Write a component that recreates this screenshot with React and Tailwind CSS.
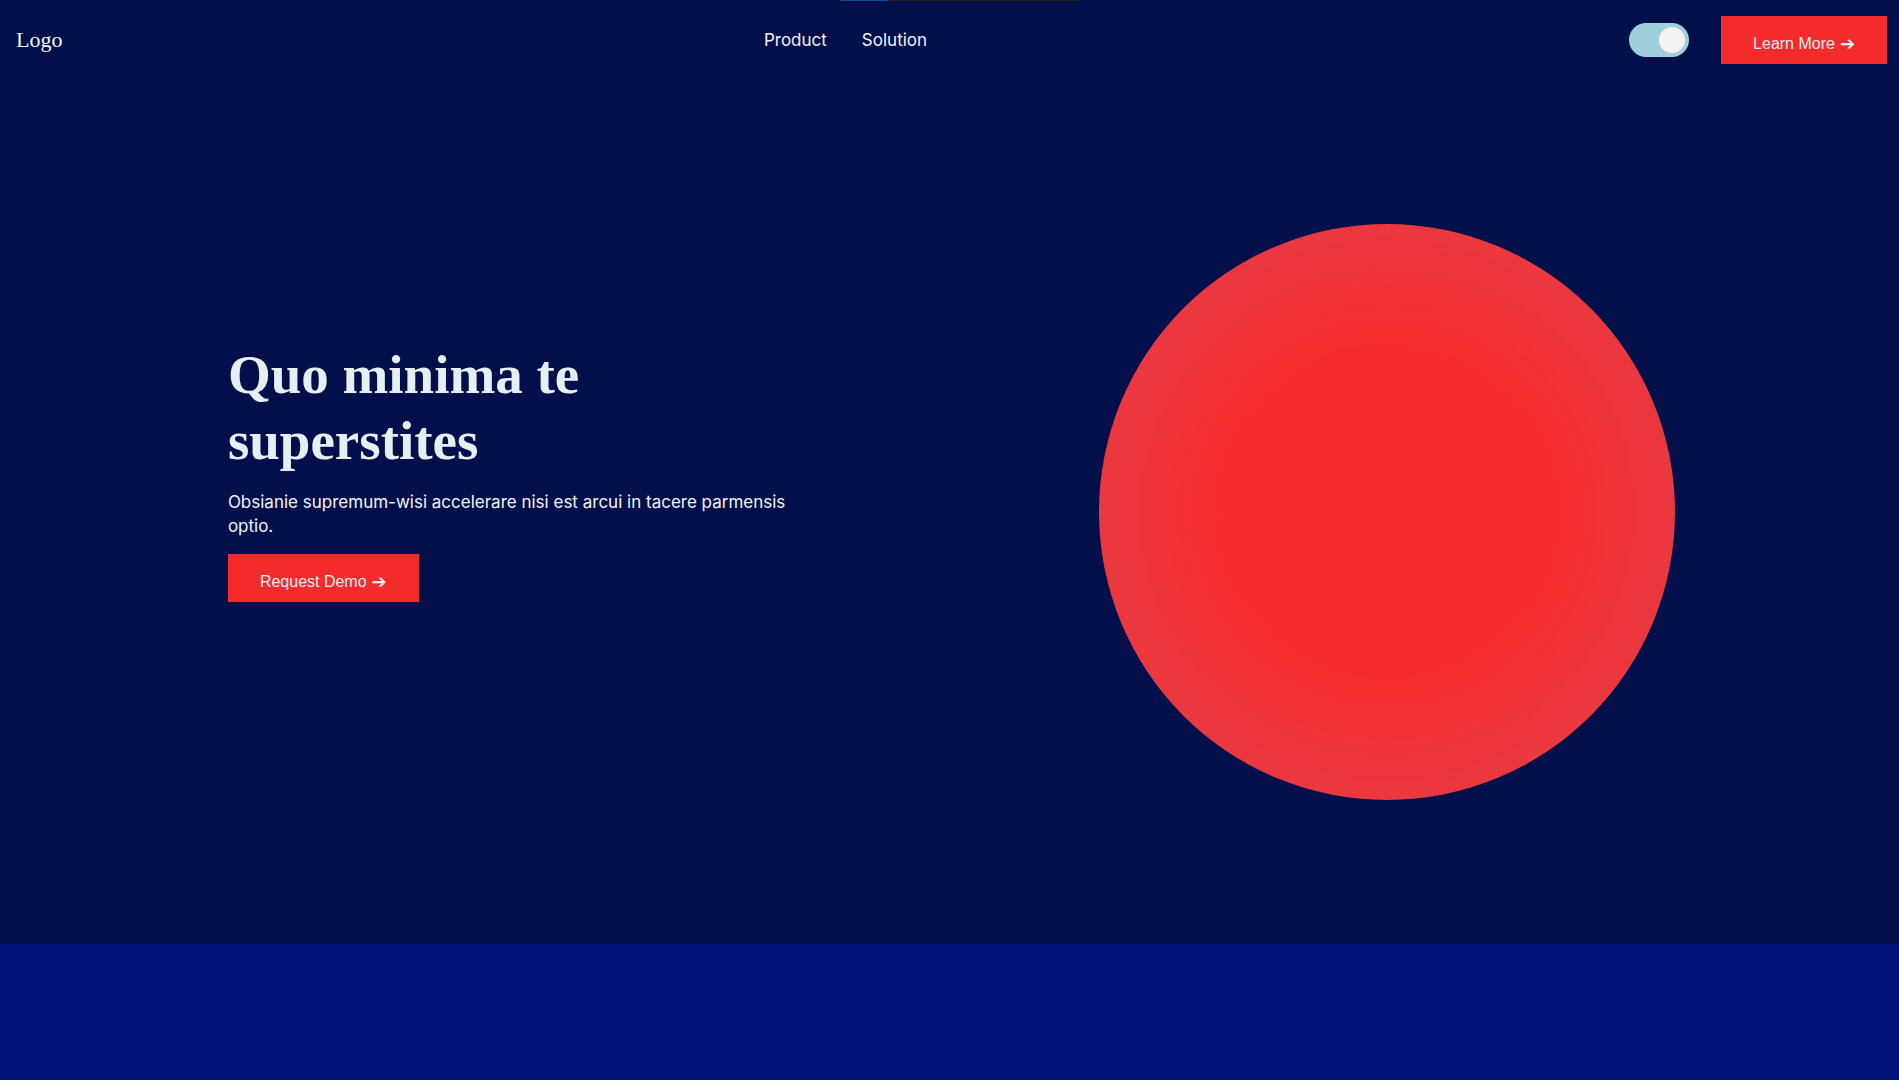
function ActionButton({ label, className = "" }) {
  return (
    <button
      type="button"
      className={`flex h-12 shrink-0 items-center gap-[5px] bg-[#f42b2b] px-8 pt-2 font-['Liberation_Sans',sans-serif] text-base leading-5 whitespace-nowrap text-[#e6eff3] ${className}`}
    >
      {label}
      <span aria-hidden="true" className="font-['DejaVu_Sans',sans-serif] text-lg leading-5">➔</span>
    </button>
  );
}

function ThemeSwitch() {
  return (
    <label className="flex shrink-0 cursor-pointer">
      <input type="checkbox" role="switch" defaultChecked aria-label="Dark theme" className="peer sr-only" />
      <span className="flex h-[34px] w-[60px] items-center rounded-full bg-gray-400 p-1 peer-checked:justify-end peer-checked:bg-[#a0cfdc]">
        <span className="size-[26px] rounded-full bg-[#f2f2f2]" />
      </span>
    </label>
  );
}

export default function App() {
  return (
    <div className="flex min-h-screen flex-col bg-[#030f4b] font-['Inter',sans-serif] text-[17px] leading-6 text-[#eef5f8]">
      <div aria-hidden="true" className="absolute inset-x-0 top-0 flex h-px justify-center">
        <span className="ml-5 w-12 bg-[#114a8c]" />
        <span className="w-48 bg-[#1f1f1f]" />
      </div>
      <header className="grid h-20 grid-cols-[1fr_auto_1fr] items-center pr-3 pl-4">
        <a href="#" className="font-['Liberation_Serif',serif] text-[22px]">Logo</a>
        <nav className="mr-[212px] flex gap-[35px]">
          <a href="#product">Product</a>
          <a href="#solution">Solution</a>
        </nav>
        <div className="flex items-center justify-end gap-8">
          <ThemeSwitch />
          <ActionButton label="Learn More" />
        </div>
      </header>
      <main className="flex grow flex-col">
        <section className="grid h-[864px] grid-cols-[49%_1fr] items-center pr-56 pl-[12%]">
          <div className="flex flex-col items-start pb-20">
            <h1 className="max-w-96 font-['Liberation_Serif',serif] text-[55px] leading-[66px] font-bold text-[#e6eff3]">
              Quo minima te superstites
            </h1>
            <p className="mt-4 max-w-[576px]">
              Obsianie supremum-wisi accelerare nisi est arcui in tacere parmensis optio.
            </p>
            <ActionButton label="Request Demo" className="mt-4" />
          </div>
          <div className="flex justify-end">
            <div className="size-[576px] rounded-full bg-[radial-gradient(circle,#f42b2b_40%,#eb383f_70%)]" />
          </div>
        </section>
        <section className="grow bg-[#001275]" />
      </main>
    </div>
  );
}
